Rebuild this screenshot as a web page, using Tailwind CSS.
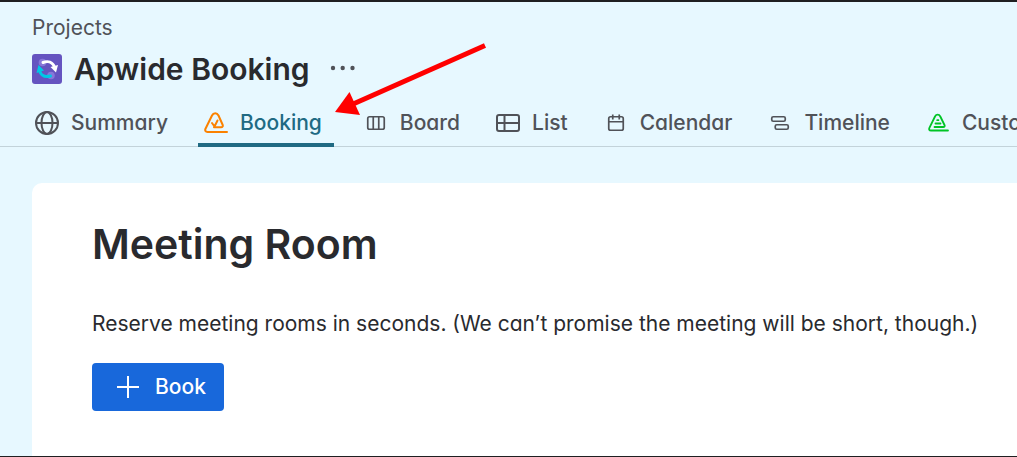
<!DOCTYPE html>
<html lang="en">
<head>
    <meta charset="UTF-8">
    <meta name="viewport" content="width=device-width, initial-scale=1.0">
    <title>Apwide Booking</title>
    <script src="https://cdn.jsdelivr.net/npm/@tailwindcss/browser@4"></script>
</head>
<body class="relative flex min-h-screen flex-col overflow-x-hidden border-t-2 border-b border-[#1f1f21] bg-[#e7f8ff] font-['Inter',sans-serif] text-[21px] leading-[30px] text-[#292a2e] [font-feature-settings:'cv11']">

    <!-- Project Header -->
    <header class="px-8 pt-[11px]">
        <a href="#" class="block text-[#505258]">Projects</a>
        <div class="mt-2 flex h-9 items-center">
            <svg class="size-[30px] shrink-0" viewBox="0 0 30 30" fill="none">
                <rect width="30" height="30" rx="3" fill="#6554c0"/>
                <circle cx="10.500" cy="8.500" r="3.800" fill="#8777d9"/>
                <circle cx="19" cy="21.500" r="3.800" fill="#8777d9"/>
                <path d="M11 8.500c5-2 9.500-.5 11.500 4.500" stroke="#fff" stroke-width="3" stroke-linecap="round"/>
                <path d="M18.500 13l7.500-2-2 7.500z" fill="#fff"/>
                <path d="M18.500 22c-5 1.500-9 0-11-5" stroke="#00c7e6" stroke-width="3" stroke-linecap="round"/>
                <path d="M4.500 19l2-8 5.500 5.500z" fill="#00c7e6"/>
            </svg>
            <h1 class="ml-3 text-[30px] leading-9 font-semibold">Apwide Booking</h1>
            <button type="button" aria-label="More actions" class="ml-[18px] size-8 shrink-0">
                <svg class="size-8" viewBox="0 0 32 32" fill="#505258">
                    <circle cx="5" cy="15" r="2.200"/>
                    <circle cx="14.700" cy="15" r="2.200"/>
                    <circle cx="24.500" cy="15" r="2.200"/>
                </svg>
            </button>
        </div>
    </header>

    <!-- Tabs -->
    <nav class="flex h-[60px] shrink-0 gap-[18px] border-b border-[#c3d3da] pl-[29px] font-medium whitespace-nowrap text-[#505258]">
        <a href="#" class="flex items-center gap-3 pt-3 pr-3 pl-1.5">
            <svg class="size-6 shrink-0" viewBox="0 0 24 24" fill="none" stroke="currentColor" stroke-width="2">
                <circle cx="12" cy="12" r="11"/>
                <ellipse cx="12" cy="12" rx="5.500" ry="11"/>
                <path d="M1 12h22"/>
            </svg>
            Summary
        </a>
        <a href="#" aria-current="page" class="relative mr-1.5 flex items-center gap-3 pt-3 pr-3 pl-1.5 text-[#206a83] after:absolute after:inset-x-0 after:-bottom-px after:h-1 after:bg-[#206a83]">
            <svg class="size-6 shrink-0" viewBox="0 0 24 24" fill="none" stroke="#fb8200" stroke-width="2" stroke-linecap="round" stroke-linejoin="round">
                <path d="M23 21H3.500c-2 0-2.800-1.500-2-3.200L8 4.500c1.500-3 5-3 6.500 0l4 9c.8 1.700 0 2.700-1.500 2.700H10"/>
                <path d="M8 12l2.500 3.500L13.500 9.500"/>
            </svg>
            Booking
        </a>
        <a href="#" class="flex items-center gap-3 pt-3 pr-3 pl-1.5">
            <svg class="size-6 shrink-0" viewBox="0 0 24 24" fill="none" stroke="currentColor" stroke-width="1.700">
                <rect x="3.750" y="5.750" width="16.500" height="12.500" rx="1.800"/>
                <path d="M9.250 6v12M14.750 6v12"/>
            </svg>
            Board
        </a>
        <a href="#" class="flex items-center gap-3 pt-3 pr-3 pl-1.5">
            <svg class="size-6 shrink-0" viewBox="0 0 24 24" fill="none" stroke="currentColor" stroke-width="2">
                <rect x="1" y="4" width="22" height="16" rx="2"/>
                <path d="M8.500 4v16M1 12h22"/>
            </svg>
            List
        </a>
        <a href="#" class="flex items-center gap-3 pt-3 pr-3 pl-1.5">
            <svg class="size-6 shrink-0" viewBox="0 0 24 24" fill="none" stroke="currentColor" stroke-width="1.700">
                <rect x="4.750" y="5.750" width="14.500" height="13.500" rx="1.800"/>
                <path d="M5 10.750h14M8.750 3.500v5M15.250 3.500v5"/>
            </svg>
            Calendar
        </a>
        <a href="#" class="flex items-center gap-3 pt-3 pr-3 pl-1.5">
            <svg class="size-6 shrink-0" viewBox="0 0 24 24" fill="none" stroke="currentColor" stroke-width="1.700">
                <rect x="3.750" y="5.750" width="13.500" height="4.500" rx="1.500"/>
                <rect x="7.250" y="13.750" width="13" height="4.500" rx="1.500"/>
            </svg>
            Timeline
        </a>
        <a href="#" class="flex items-center gap-3 pt-3 pr-3 pl-1.5">
            <svg class="size-6 shrink-0" viewBox="0 0 24 24" fill="none" stroke="#00c425" stroke-width="1.800" stroke-linecap="round" stroke-linejoin="round">
                <path d="M22 19.500H5c-1.800 0-2.300-1.200-1.600-2.700L9 5.500c1.300-2.400 4-2.400 5.300 0l4.200 8.500c.6 1.300 0 2-1.200 2H8.500"/>
                <path d="M9.500 12.500h5M11.200 9.200h1.200"/>
            </svg>
            Custom
        </a>
    </nav>

    <!-- Booking Page -->
    <main class="ml-8 mt-9 grow rounded-tl-[10px] bg-white pt-9 pl-[60px]">
        <h2 class="text-[41px] leading-[50px] font-semibold">Meeting Room</h2>
        <p class="mt-10">Reserve meeting rooms in seconds. (We can’t promise the meeting will be short, though.)</p>
        <button type="button" class="mt-6 flex h-12 items-center gap-[15px] rounded bg-[#1868db] pr-[18px] pl-6 font-medium text-white">
            <svg class="size-6" viewBox="0 0 24 24" stroke="currentColor" stroke-width="2">
                <path d="M1 12h22M12 1v22"/>
            </svg>
            Book
        </button>
    </main>

    <!-- Arrow pointing at the Booking tab -->
    <svg class="pointer-events-none absolute top-[38px] left-[330px] h-[84px] w-40" viewBox="330 40 160 84" fill="none">
        <path d="M485 45.500L352 104.500" stroke="#f00" stroke-width="5"/>
        <path d="M335 112l14.500-20 10.500 23z" fill="#f00"/>
    </svg>

</body>
</html>
